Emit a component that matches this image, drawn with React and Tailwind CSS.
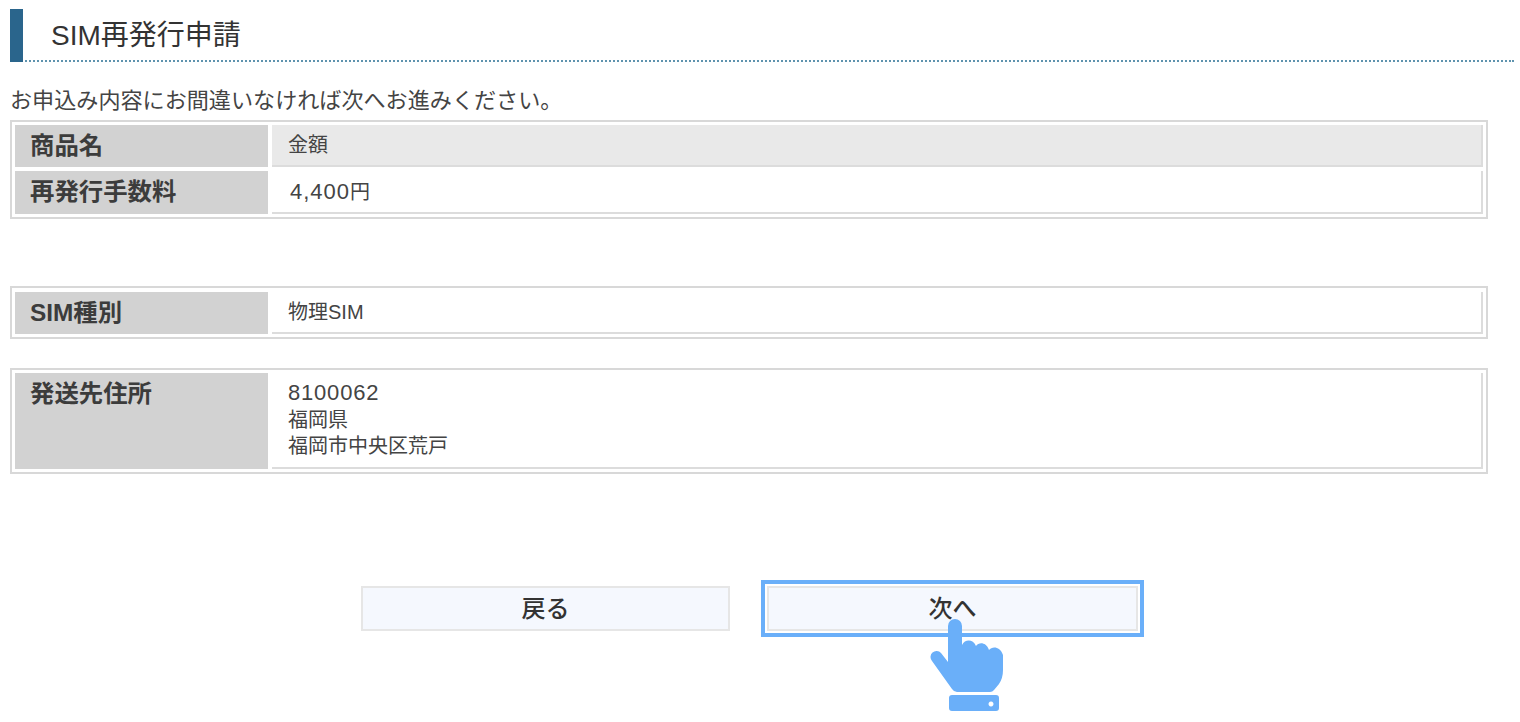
const font = { fontFamily: '"Liberation Sans", "Noto Sans CJK JP", sans-serif' };

const Row = ({ label, shaded, tall, children, className = "" }) => (
    <div className={`flex gap-1 ${className}`}>
        {/* LABEL */}
        <div className={`w-[253px] shrink-0 bg-[#d2d2d2] pl-[15px] text-[24.4px] font-bold text-[#3c3c3c] ${tall ? "pt-[5px] leading-[32px]" : "flex items-center"}`}>
            {label}
        </div>
        {/* VALUE */}
        <div className={`flex-1 border-r-2 border-b-2 border-[#dcdcdc] pl-4 text-[20px] text-[#444] ${shaded ? "bg-[#e9e9e9]" : "bg-white"} ${tall ? "" : "flex items-center"}`}>
            {children}
        </div>
    </div>
);

const Hand = () => (
    <svg className="absolute left-[929px] top-[617px]" width="76" height="96" viewBox="0 0 76 96" fill="#6aaff9">
        <path d="M19 9a7 7 0 0 1 14 0V28C36 22 44 22 47 29C50 25 57 25 60 33C63 29 71 29 74 38V53q0 8-4 14l-5 6q-1.5 2-4 2H28q-3 0-5-3L3 44a6 6 0 0 1 9-8L19 45Z" />
        <path fillRule="evenodd" d="M23 78H67a3 3 0 0 1 3 3V91a3 3 0 0 1-3 3H23a3 3 0 0 1-3-3V81a3 3 0 0 1 3-3ZM62 84.5a2.5 2.5 0 1 0 .01 0Z" />
    </svg>
);

const App = () => {
    return (
        <div className="relative h-[722px] w-[1520px] overflow-hidden bg-white pt-[9px] text-[#333]" style={font}>
            {/* TITLE */}
            <div className="ml-[10px] mr-[6px] flex h-[53px] items-stretch border-b-2 border-dotted border-[#5f93ae]">
                <div className="-mb-[2px] w-[13px] bg-[#2a658c]" />
                <h1 className="ml-7 text-[28px] leading-[53px] font-normal text-[#333]">SIM再発行申請</h1>
            </div>

            <p className="ml-[10px] mt-[26px] text-[22.1px] leading-[26px] text-[#444]">
                お申込み内容にお間違いなければ次へお進みください。
            </p>

            {/* ITEM TABLE */}
            <div className="ml-[10px] mt-[6px] flex w-[1478px] flex-col gap-1 border-2 border-[#d8d8d8] p-[3px]">
                <Row label="商品名" shaded className="h-[42px]">金額</Row>
                <Row label="再発行手数料" className="h-[43px]">
                    <span className="pl-[2px] text-[22px] tracking-[1px]">4,400<span className="text-[20px] tracking-normal">円</span></span>
                </Row>
            </div>

            {/* SIM TYPE */}
            <div className="ml-[10px] mt-[67px] w-[1478px] border-2 border-[#d8d8d8] p-[3px] pt-[4px]">
                <Row label="SIM種別" className="h-[42px]">物理SIM</Row>
            </div>

            {/* ADDRESS */}
            <div className="ml-[10px] mt-[29px] w-[1478px] border-2 border-[#d8d8d8] p-[3px]">
                <Row label="発送先住所" tall className="h-[96px]">
                    <div className="pt-[7px] leading-[26.5px]">
                        <div className="text-[22px] tracking-[0.8px]">8100062</div>
                        <div>福岡県</div>
                        <div>福岡市中央区荒戸</div>
                    </div>
                </Row>
            </div>

            {/* BUTTONS */}
            <div className="ml-[361px] mt-[106px] flex items-center gap-[31px]">
                <button className="h-[45px] w-[369px] border-2 border-[#e6e6e6] bg-[#f5f8fe] text-[24px] font-medium text-[#333]">
                    戻る
                </button>
                <div className="border-4 border-[#6aaff9] p-[2px]">
                    <button className="block h-[45px] w-[371px] border-2 border-[#e6e6e6] bg-[#f5f8fe] text-[24px] font-medium text-[#333]">
                        次へ
                    </button>
                </div>
            </div>

            <Hand />
        </div>
    );
};

export default App;
